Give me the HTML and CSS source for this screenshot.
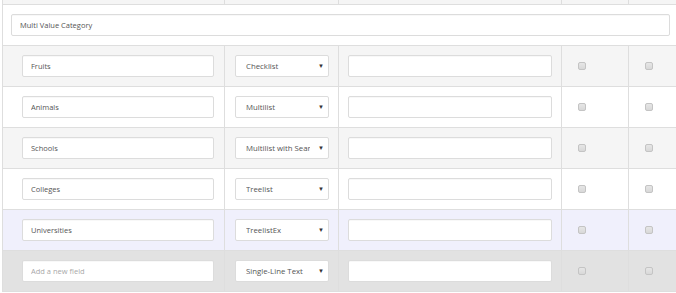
FILE: index.html
```html
<!DOCTYPE html>
<html lang="en">
<head>
  <meta charset="UTF-8" />
  <title>Field Editor</title>
  <link rel="stylesheet" href="styles.css">
</head>
<body>

  <table class="fields">
    <colgroup>
      <col class="c-name">
      <col class="c-type">
      <col class="c-source">
      <col class="c-flag">
      <col class="c-last">
    </colgroup>
    <thead>
      <tr class="head-row">
        <th></th><th></th><th></th><th></th><th></th>
      </tr>
    </thead>
    <tbody>
      <!-- Section title -->
      <tr class="section-row">
        <td colspan="5"><input type="text" class="section-input" value="Multi Value Category"></td>
      </tr>

      <tr class="row-alt">
        <td class="name-cell"><input type="text" class="field" value="Fruits"></td>
        <td class="type-cell">
          <div class="select-wrap"><select><option>Checklist</option></select></div>
        </td>
        <td class="source-cell"><input type="text" class="field"></td>
        <td class="flag-cell"><input type="checkbox"></td>
        <td class="flag-cell"><input type="checkbox"></td>
      </tr>
      <tr>
        <td class="name-cell"><input type="text" class="field" value="Animals"></td>
        <td class="type-cell">
          <div class="select-wrap"><select><option>Multilist</option></select></div>
        </td>
        <td class="source-cell"><input type="text" class="field"></td>
        <td class="flag-cell"><input type="checkbox"></td>
        <td class="flag-cell"><input type="checkbox"></td>
      </tr>
      <tr class="row-alt">
        <td class="name-cell"><input type="text" class="field" value="Schools"></td>
        <td class="type-cell">
          <div class="select-wrap"><select><option>Multilist with Search</option></select></div>
        </td>
        <td class="source-cell"><input type="text" class="field"></td>
        <td class="flag-cell"><input type="checkbox"></td>
        <td class="flag-cell"><input type="checkbox"></td>
      </tr>
      <tr>
        <td class="name-cell"><input type="text" class="field" value="Colleges"></td>
        <td class="type-cell">
          <div class="select-wrap"><select><option>Treelist</option></select></div>
        </td>
        <td class="source-cell"><input type="text" class="field"></td>
        <td class="flag-cell"><input type="checkbox"></td>
        <td class="flag-cell"><input type="checkbox"></td>
      </tr>
      <tr class="row-active">
        <td class="name-cell"><input type="text" class="field" value="Universities"></td>
        <td class="type-cell">
          <div class="select-wrap"><select><option>TreelistEx</option></select></div>
        </td>
        <td class="source-cell"><input type="text" class="field"></td>
        <td class="flag-cell"><input type="checkbox"></td>
        <td class="flag-cell"><input type="checkbox"></td>
      </tr>

      <!-- New field row -->
      <tr class="row-new">
        <td class="name-cell"><input type="text" class="field" placeholder="Add a new field"></td>
        <td class="type-cell">
          <div class="select-wrap"><select><option>Single-Line Text</option></select></div>
        </td>
        <td class="source-cell"><input type="text" class="field"></td>
        <td class="flag-cell"><input type="checkbox"></td>
        <td class="flag-cell"><input type="checkbox"></td>
      </tr>
    </tbody>
  </table>

</body>
</html>
```

FILE: styles.css
```css
html, body {
  margin: 0;
  padding: 0;
  background-color: #ffffff;
  font-family: "Open Sans", Arial, sans-serif;
  overflow: hidden;
}

/* Field table */
.fields {
  border-collapse: collapse;
  table-layout: fixed;
  width: 674px;
  margin-left: 2px;
}
.c-name { width: 222px; }
.c-type { width: 114px; }
.c-source { width: 223px; }
.c-flag { width: 67px; }
.c-last { width: 48px; }

.fields td, .fields th {
  border: 1px solid #dedede;
  padding: 0;
  vertical-align: middle;
}

.head-row th {
  height: 4px;
  border-top: none;
  background-color: #f5f5f5;
}

.section-row td {
  height: 39px;
  padding: 0 6px 0 8px;
  background-color: #ffffff;
}

.fields tbody tr {
  height: 41px;
}
.row-alt td { background-color: #f5f5f5; }
.row-active td { background-color: #f0f0fc; }
.row-new td { background-color: #e2e2e2; }

/* Inputs */
input[type="text"] {
  box-sizing: border-box;
  height: 22px;
  width: 100%;
  border: 1px solid #dcdcdc;
  border-radius: 2px;
  background: #ffffff;
  padding: 0 8px;
  font-family: "Open Sans", Arial, sans-serif;
  font-size: 7.5px;
  color: #555;
  box-shadow: inset 0 1px 1px rgba(0, 0, 0, 0.03);
  display: block;
}
input[type="text"]::placeholder {
  color: #a8a8a8;
}

.name-cell { padding: 0 10px 0 19px !important; }
.type-cell { padding: 0 9px 0 10px !important; }
.source-cell { padding: 0 9px 0 9px !important; }
.flag-cell { padding: 0 0 0 16px !important; }

/* Select boxes */
.select-wrap {
  position: relative;
}
.select-wrap select {
  -webkit-appearance: none;
  appearance: none;
  box-sizing: border-box;
  width: 100%;
  height: 22px;
  border: 1px solid #dcdcdc;
  border-radius: 2px;
  background: #ffffff;
  padding: 0 18px 0 10px;
  font-family: "Open Sans", Arial, sans-serif;
  font-size: 7.8px;
  color: #555;
  display: block;
}
.select-wrap::after {
  content: "▼";
  position: absolute;
  right: 5px;
  top: 7px;
  font-size: 6px;
  color: #333;
  pointer-events: none;
}

/* Checkboxes */
input[type="checkbox"] {
  -webkit-appearance: none;
  appearance: none;
  width: 8px;
  height: 8px;
  margin: 0;
  border: 1px solid #c4c4c4;
  border-radius: 2px;
  background: linear-gradient(#e6e6e6, #d8d8d8);
  display: block;
}
```
